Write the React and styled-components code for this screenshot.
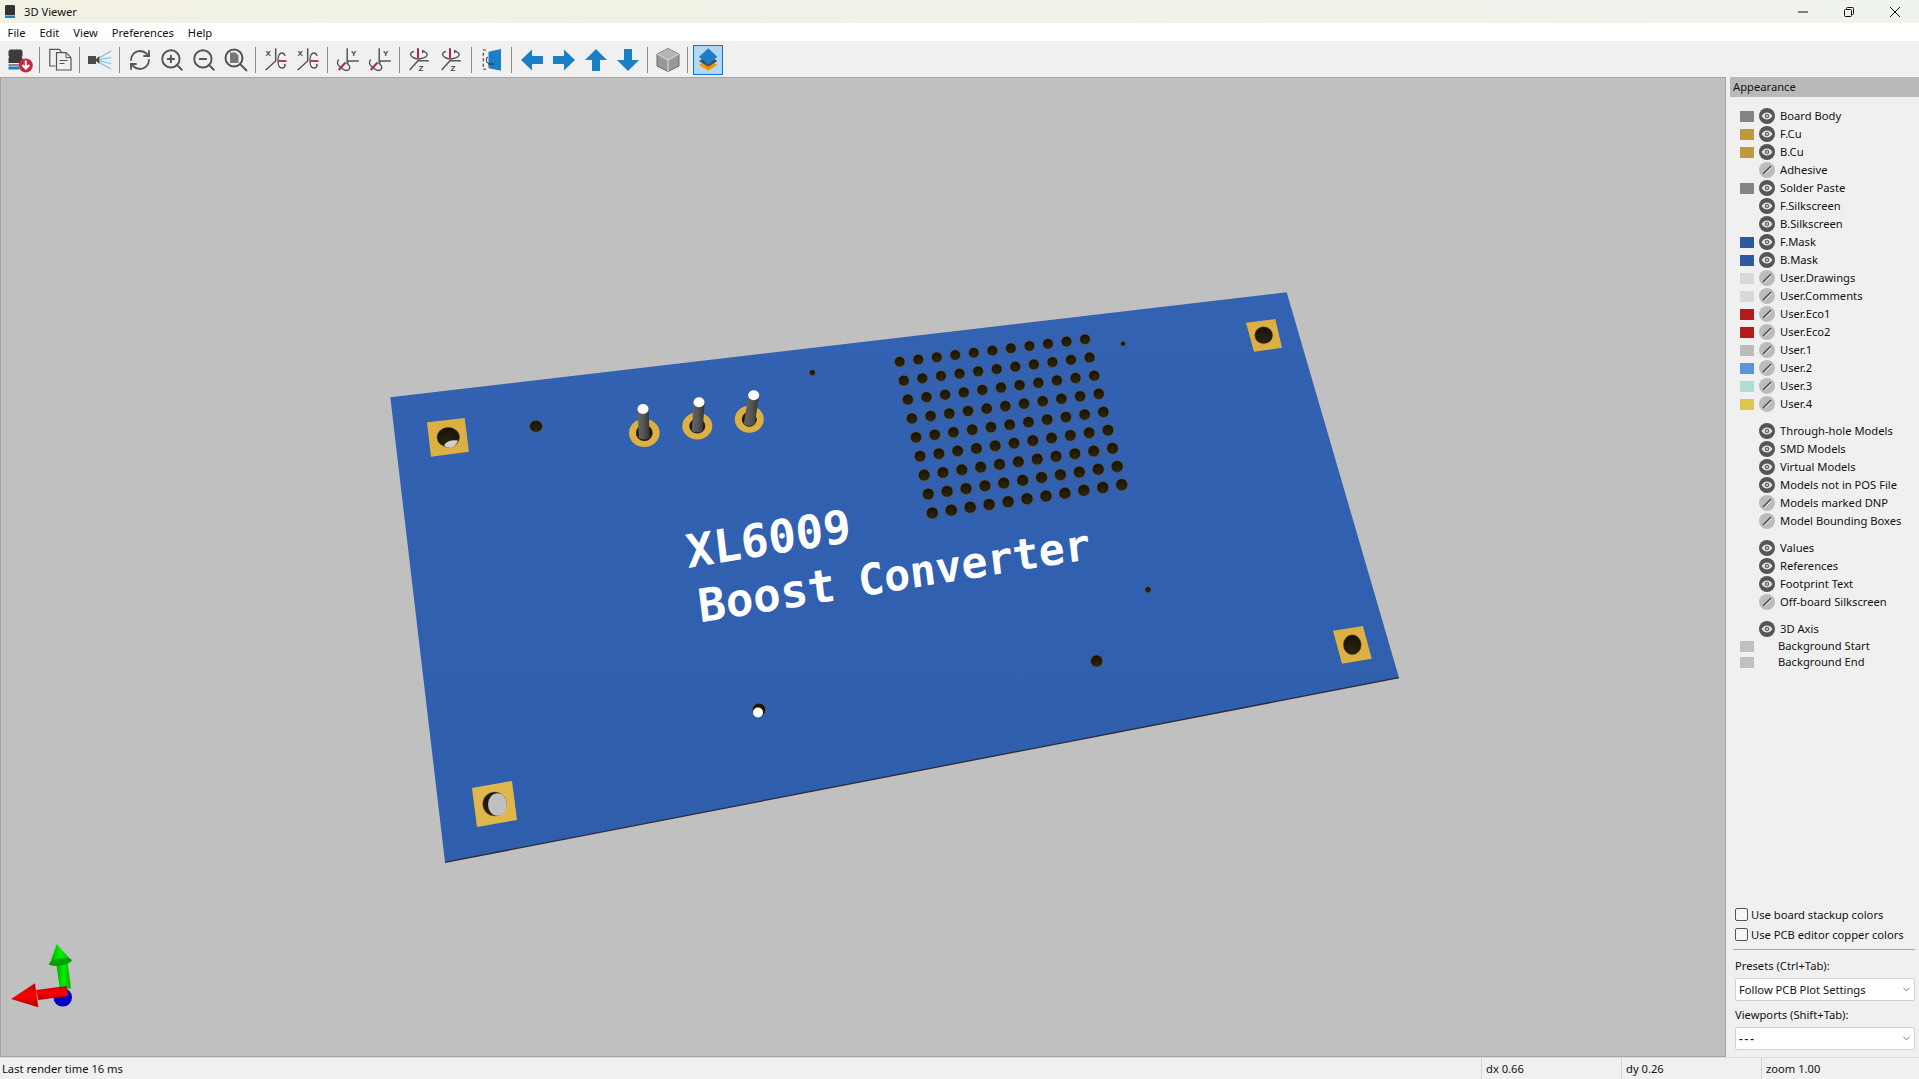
import React from 'react'
import styled, { createGlobalStyle } from 'styled-components'
import { ChevronDown, RefreshCw, ZoomIn, ZoomOut } from 'lucide-react'

const GlobalStyle = createGlobalStyle`
  html, body { margin: 0; padding: 0; height: 100%; overflow: hidden; }
  #root { height: 100%; }
  body { font-family: "Noto Sans", "Open Sans", sans-serif; font-size: 11.2px; color: #111; background: #f0f0f0; }
`

const Window = styled.div`
  display: flex;
  flex-direction: column;
  height: 100vh;
`

const TitleBar = styled.div`
  display: flex;
  align-items: center;
  height: 23px;
  flex: none;
  padding: 0 1px 0 5px;
  background: linear-gradient(90deg, #f2f1e3, #eef3ec);
`

const TitleText = styled.span`
  margin-left: 9px;
  flex: 1;
`

const WinButton = styled.div`
  width: 46px;
  height: 23px;
  display: flex;
  align-items: center;
  justify-content: center;
`

const MenuBar = styled.div`
  display: flex;
  align-items: center;
  height: 18px;
  flex: none;
  padding-left: 1px;
  background: #fff;
`

const MenuItem = styled.span`
  padding: 0 7.3px 0 6.6px;
`

const ToolBar = styled.div`
  display: flex;
  align-items: center;
  height: 35px;
  padding: 1px 0 0 3.5px;
  flex: none;
  background: #f0f0f0;
`

const ToolButton = styled.div`
  display: flex;
  align-items: center;
  justify-content: center;
  flex: none;
  width: ${p => (p.$active ? '30px' : '32px')};
  height: ${p => (p.$active ? '30px' : '32px')};
  margin: 0 ${p => (p.$active ? '1px' : '0')};
  box-sizing: border-box;
  background: ${p => (p.$active ? '#b3d7f5' : 'transparent')};
  border: ${p => (p.$active ? '1px solid #0a78d7' : 'none')};
`

const ToolSep = styled.div`
  flex: none;
  width: 1px;
  height: 26px;
  margin: 0 3.5px;
  background: #8a8a8a;
`

const Main = styled.div`
  display: flex;
  flex: 1;
  min-height: 0;
`

const Viewport = styled.div`
  flex: none;
  width: 1726px;
  box-sizing: border-box;
  border: 1px solid #a4a4a4;
  background: #c0c0c0;
  overflow: hidden;
  svg { display: block; }
`

const Panel = styled.div`
  flex: 1;
  display: flex;
  flex-direction: column;
  min-width: 0;
  margin-left: 4px;
`

const PanelHeader = styled.div`
  height: 20px;
  line-height: 20px;
  padding-left: 3px;
  background: #b9b9b9;
  flex: none;
`

const LayerList = styled.div`
  display: flex;
  flex-direction: column;
  padding: 10px 0 0 10px;
  flex: 1;
`

const LayerGroup = styled.div`
  display: flex;
  flex-direction: column;
  margin-bottom: 9px;
`

const LayerRow = styled.div`
  display: flex;
  align-items: center;
  height: 18px;
`

const BgRow = styled.div`
  display: flex;
  align-items: center;
  height: 16px;
`

const Swatch = styled.div`
  flex: none;
  width: 14px;
  height: 11px;
  margin-right: ${p => p.$gap || 5}px;
  background: ${p => p.$color || 'transparent'};
`

const LayerName = styled.span`
  margin: 0 0 2px ${p => p.$flush ? 0 : 5}px;
  white-space: nowrap;
`

const PanelFooter = styled.div`
  display: flex;
  flex-direction: column;
  padding: 0 4px 7px 5px;
  flex: none;
`

const CheckRow = styled.label`
  display: flex;
  align-items: center;
  height: 20px;
  gap: 3px;
`

const CheckBox = styled.span`
  width: 11px;
  height: 11px;
  border: 1px solid #555;
  border-radius: 2px;
  background: #f6f6f6;
`

const Rule = styled.div`
  height: 1px;
  margin: 5px 0 7px -2px;
  background: #a8a8a8;
`

const FieldLabel = styled.div`
  height: 18px;
  line-height: 18px;
  margin-bottom: 3px;
`

const Select = styled.div`
  display: flex;
  align-items: center;
  justify-content: space-between;
  height: 23px;
  box-sizing: border-box;
  padding: 0 2.5px 0 3px;
  margin-bottom: ${p => (p.$last ? 0 : 5)}px;
  background: #fff;
  border: 1px solid #d0d0d0;
  border-radius: 2px;
`

const DashValue = styled.span`
  letter-spacing: 2px;
  font-weight: 600;
`

const StatusBar = styled.div`
  display: flex;
  align-items: center;
  height: 22px;
  flex: none;
  box-sizing: border-box;
  border-top: 1px solid #dcdcdc;
  background: #f0f0f0;
`

const StatusCell = styled.div`
  box-sizing: border-box;
  height: 100%;
  line-height: 21px;
  padding-left: ${p => (p.$first ? 2 : 4)}px;
  width: ${p => p.$width}px;
  border-left: ${p => (p.$first ? 'none' : '1px solid #d4d4d4')};
`

const Icon = ({ children }) => (
  <svg width="24" height="24" viewBox="0 0 24 24" style={{ overflow: 'visible' }}>{children}</svg>
)

const SaveIcon = () => (
  <Icon>
    <path d="M2 1.500h11l1.500 1.500v5l-1 1 1 1v5H.5v-5l1-1-1-1V3z" fill="#3c3c3c" />
    <rect x="0.500" y="16.500" width="15" height="1" fill="#222" />
    <rect x="0.500" y="18.500" width="11" height="3" fill="#1a7fc8" />
    <circle cx="17.800" cy="17.500" r="7" fill="#c8283c" />
    <path d="M17.800 12.500v8M14.300 17l3.500 3.500 3.500-3.500" fill="none" stroke="#fff" strokeWidth="2" />
  </Icon>
)

const CopyIcon = () => (
  <Icon>
    <path d="M7.500 18H1.800V1.300h9.500l2.500 3" fill="none" stroke="#555" strokeWidth="1.200" />
    <path d="M8.500 4.700h9.500l5 5V22H8.500z" fill="#f0f0f0" stroke="#555" strokeWidth="1.200" />
    <path d="M18 4.700v5h5" fill="none" stroke="#555" strokeWidth="1" />
    <path d="M11.500 12.500h8M11.500 15.500h5" stroke="#555" strokeWidth="1.200" />
  </Icon>
)

const CameraIcon = () => (
  <Icon>
    <rect x="0" y="8" width="8" height="8" fill="#4a4a4a" />
    <path d="M8 11l3.500-3v8L8 13z" fill="#4a4a4a" />
    <path d="M12 9.500L23 3M12 11.500L23 9.500M12 13L23 15.500M12 15L23 21" stroke="#6cc0ec" strokeWidth="1.100" fill="none" />
  </Icon>
)

const FitIcon = () => (
  <Icon>
    <circle cx="10" cy="10" r="8.500" fill="none" stroke="#555" strokeWidth="2" />
    <path d="M6 4.500h5.500l3 3V15H6z" fill="#777" />
    <path d="M16 16l7 7" stroke="#555" strokeWidth="2" />
  </Icon>
)

const axisText = { fontFamily: 'Liberation Sans, sans-serif', fontSize: 8, fontWeight: 700, fill: '#444' }

const RotXIcon = () => (
  <Icon>
    <text x="1.500" y="8.300" style={axisText}>X</text>
    <path d="M11.700 .3V13L1.700 22" fill="none" stroke="#555" strokeWidth="1.500" />
    <path d="M14 13h8.500" stroke="#c02040" strokeWidth="1.800" />
    <path d="M18 5c-3 0-4 4-4 8s1.500 7 4 7 3-2 3-3M18 5c1.500 0 2.500 1 3 3" fill="none" stroke="#555" strokeWidth="1.300" />
    <path d="M19.500 17l1.500-1.500 1.500 2z" fill="#555" />
  </Icon>
)

const RotYIcon = () => (
  <Icon>
    <text x="15" y="8.300" style={axisText}>Y</text>
    <path d="M11.200 .3V13h11.600" fill="none" stroke="#555" strokeWidth="1.500" />
    <path d="M9.500 14.500L2.800 22" stroke="#c02040" strokeWidth="2" />
    <path d="M3 11.500c-2.500 1.500-2 5 1 7.500s7 4.500 9 2.500 0-5-2.500-6.500" fill="none" stroke="#555" strokeWidth="1.400" />
    <path d="M10 13l3 1-1.500 2.500z" fill="#555" />
  </Icon>
)

const RotZIcon = () => (
  <Icon>
    <path d="M10 .3v10" stroke="#c02040" strokeWidth="2" />
    <path d="M6 3.500c-3 .5-4 2-3 4s5 3.500 7 3.500 8-1 9-3.500-2-4-5-4.500" fill="none" stroke="#555" strokeWidth="1.400" />
    <path d="M14 1.500l3 2-3 2z" fill="#555" />
    <path d="M20.700 12.700H10L1.700 22" fill="none" stroke="#555" strokeWidth="1.500" />
    <text x="10.500" y="23" style={axisText}>Z</text>
  </Icon>
)

const OrthoIcon = () => (
  <Icon>
    <path d="M6 2H3.300v19.300H6" fill="none" stroke="#333" strokeWidth="1.100" strokeDasharray="3 2.500" />
    <path d="M8 9a3.500 3.500 0 0 0 0 6h3" fill="none" stroke="#555" strokeWidth="1.200" />
    <path d="M8.500 3.700L21 1v21.700l-12.500-2.400z" fill="#1a7fc8" />
    <path d="M8 16h6" stroke="#333" strokeWidth="1.200" />
  </Icon>
)

const ArrowIcon = ({ points }) => (
  <Icon><polygon points={points} fill="#1a80c6" /></Icon>
)

const CubeIcon = () => (
  <Icon>
    <path d="M12 .5L23 6v12l-11 5.500L1 18V6z" fill="#989898" stroke="#6a6a6a" strokeWidth="1" />
    <path d="M12 .5L23 6l-11 6L1 6z" fill="#b4b4b4" />
    <path d="M1 6l11 6 11-6M12 12v11.500" fill="none" stroke="#dcdcdc" strokeWidth="1" />
  </Icon>
)

const LayersIcon = () => (
  <Icon>
    <path d="M3 17l9.300-6 9 6-9 5.700z" fill="#f0960e" />
    <path d="M3 13l9.300-6 9 6-9 5.700z" fill="#4a4a4a" />
    <path d="M3 8.700L12.300.3l9 8.400-9 8.300z" fill="#1a7fc8" />
  </Icon>
)

const EyeIcon = ({ on }) => (
  <svg width="16" height="16" viewBox="0 0 16 16" style={{ flex: 'none' }}>
    {on ? (
      <>
        <circle cx="8" cy="8" r="8" fill="#555" />
        <path d="M2.500 8C4 5.500 6 4.500 8 4.500S12 5.500 13.500 8C12 10.500 10 11.500 8 11.500S4 10.500 2.500 8z" fill="#e4e4e4" />
        <circle cx="8" cy="8" r="2.300" fill="#666" />
        <circle cx="8" cy="8" r="1" fill="#ddd" />
      </>
    ) : (
      <>
        <circle cx="8" cy="8" r="8" fill="#bcbcbc" />
        <path d="M4 12L12 4" stroke="#4c4c4c" strokeWidth="1.500" />
        <path d="M5.500 12.500L12.500 5.500" stroke="#efefef" strokeWidth="1" />
      </>
    )}
  </svg>
)

const layerGroups = [
  [
    ['Board Body', '#848484', 1],
    ['F.Cu', '#bf9a3d', 1],
    ['B.Cu', '#bf9a3d', 1],
    ['Adhesive', null, 0],
    ['Solder Paste', '#848484', 1],
    ['F.Silkscreen', null, 1],
    ['B.Silkscreen', null, 1],
    ['F.Mask', '#2d5a9f', 1],
    ['B.Mask', '#2d5a9f', 1],
    ['User.Drawings', '#d8d8d8', 0],
    ['User.Comments', '#d8d8d8', 0],
    ['User.Eco1', '#b41a1a', 0],
    ['User.Eco2', '#b41a1a', 0],
    ['User.1', '#bcbcbc', 0],
    ['User.2', '#5a95dd', 0],
    ['User.3', '#b2dbd1', 0],
    ['User.4', '#dcc84e', 0],
  ],
  [
    ['Through-hole Models', null, 1],
    ['SMD Models', null, 1],
    ['Virtual Models', null, 1],
    ['Models not in POS File', null, 1],
    ['Models marked DNP', null, 0],
    ['Model Bounding Boxes', null, 0],
  ],
  [
    ['Values', null, 1],
    ['References', null, 1],
    ['Footprint Text', null, 1],
    ['Off-board Silkscreen', null, 0],
  ],
]

// corners of the via field, in page pixels
const gridTL = [899.7, 361.7]
const gridTR = [1085, 339.3]
const gridBL = [932.3, 513]
const gridBR = [1121.7, 484.7]

const vias = []
for (let r = 0; r < 9; r++) {
  for (let c = 0; c < 11; c++) {
    const u = c / 10
    const v = r / 8
    const top = [gridTL[0] + (gridTR[0] - gridTL[0]) * u, gridTL[1] + (gridTR[1] - gridTL[1]) * u]
    const bot = [gridBL[0] + (gridBR[0] - gridBL[0]) * u, gridBL[1] + (gridBR[1] - gridBL[1]) * u]
    vias.push({ id: r + '-' + c, x: top[0] + (bot[0] - top[0]) * v, y: top[1] + (bot[1] - top[1]) * v, r: 5.3 + v * 0.7 })
  }
}

const Hole = ({ x, y, rx, ry = rx }) => (
  <ellipse cx={x} cy={y} rx={rx} ry={ry} fill="url(#holeFill)" stroke="#7d6524" strokeWidth="0.5" />
)

const Pin = ({ pad, top, rx, ry }) => (
  <g>
    <ellipse cx={pad[0]} cy={pad[1]} rx={rx} ry={ry} fill="#dcb043" />
    <ellipse cx={pad[0]} cy={pad[1]} rx={rx - 7} ry={ry - 6} fill="#1d1709" />
    <path d={`M${top[0] - 5.5} ${top[1]} L${pad[0] - 5.5} ${pad[1] + 5} Q${pad[0]} ${pad[1] + 8} ${pad[0] + 5.5} ${pad[1] + 5} L${top[0] + 5.5} ${top[1]} Z`} fill="url(#pinFill)" />
    <ellipse cx={top[0]} cy={top[1]} rx="5.500" ry="5" fill="#fff" />
  </g>
)

const Board = () => (
  <svg width="1724" height="978" viewBox="1 78 1724 978">
    <defs>
      <radialGradient id="holeFill" cx="0.5" cy="0.8" r="0.8">
        <stop offset="0" stopColor="#2b2412" />
        <stop offset="1" stopColor="#171206" />
      </radialGradient>
      <linearGradient id="pinFill" x1="0" x2="1" y1="0" y2="0">
        <stop offset="0" stopColor="#666" />
        <stop offset="0.5" stopColor="#555" />
        <stop offset="1" stopColor="#333" />
      </linearGradient>
      <linearGradient id="boardFill" x1="0" x2="0" y1="0" y2="1">
        <stop offset="0" stopColor="#3262b1" />
        <stop offset="1" stopColor="#2e5eac" />
      </linearGradient>
      <linearGradient id="greenFill" x1="0" x2="1" y1="0" y2="0">
        <stop offset="0" stopColor="#00a800" />
        <stop offset="0.5" stopColor="#00f000" />
        <stop offset="1" stopColor="#00b000" />
      </linearGradient>
      <linearGradient id="redFill" x1="0" x2="0" y1="0" y2="1">
        <stop offset="0" stopColor="#c00000" />
        <stop offset="0.5" stopColor="#ff0000" />
        <stop offset="1" stopColor="#b00000" />
      </linearGradient>
    </defs>

    <polygon points="390.3,397.3 1286.7,292.3 1399,677.7 445,862.3" fill="url(#boardFill)" />
    <path d="M445 862.300L1399 677.700" stroke="#2b2b33" strokeWidth="1.300" />

    <polygon points="427,422.300 464.700,418 469,451.700 431,456.700" fill="#dcb043" />
    <Hole x={448.3} y={437.3} rx={11.3} ry={10} />
    <path d="M444 445.500q3-6 14-5q-2 6-8 7q-4 0-6-2z" fill="#d0d0d0" />

    <polygon points="1246,322.700 1275.300,319 1282,347.700 1254,351.700" fill="#dcb043" />
    <Hole x={1263.7} y={335.3} rx={9} ry={8.5} />

    <polygon points="1333,630.700 1363,626 1371.700,658.700 1342,663.700" fill="#dcb043" />
    <Hole x={1352.3} y={644.7} rx={9} ry={10} />

    <polygon points="472,788 512,781 517,820 477,827" fill="#e0b74c" />
    <Hole x={494.7} y={804} rx={12} />
    <ellipse cx={497.5} cy={804.5} rx={9.5} ry={11.2} fill="#c0c0c0" />

    <Hole x={536} y={426.3} rx={6.5} ry={6} />
    <Hole x={812.3} y={372.7} rx={3} />
    <Hole x={1123} y={343.7} rx={2.5} />
    <Hole x={1148} y={589.7} rx={3} />
    <Hole x={1096.6} y={661} rx={6} />
    <Hole x={759} y={710} rx={6.7} />
    <circle cx={758} cy={712.5} r={5} fill="#fff" />

    {vias.map(v => <Hole key={v.id} x={v.x} y={v.y} rx={v.r} />)}

    <Pin pad={[644.3, 433]} top={[643, 409]} rx={15.3} ry={14} />
    <Pin pad={[697.3, 426]} top={[699, 402.3]} rx={15} ry={13.5} />
    <Pin pad={[749.3, 419.3]} top={[753.7, 395.3]} rx={14.5} ry={13.5} />

    <g fontFamily="'DejaVu Sans Mono', monospace" fontWeight="700" fill="#fff">
      <text fontSize="45.5" transform="matrix(1 -0.163 0.118 1 688 568)">XL6009</text>
      <text fontSize="45.5" transform="matrix(1 -0.163 0.118 1 700 622.500)">Boost</text>
      <text fontSize="42.8" transform="matrix(1 -0.163 0.118 1 860 596.500)">Converter</text>
    </g>

    <g>
      <circle cx="62.700" cy="997.300" r="9.300" fill="#0000c0" />
      <polygon points="56,961.700 67.300,960 71,988.300 60,990" fill="url(#greenFill)" />
      <polygon points="56.700,944 71.700,960.700 49.300,965" fill="url(#greenFill)" />
      <ellipse cx="60.500" cy="962" rx="11.500" ry="3.500" fill="#00a000" transform="rotate(-10 60.500 962)" />
      <polygon points="36,990 66.700,986 68.300,996 38.300,1000" fill="url(#redFill)" />
      <polygon points="11,999 35,983.300 38.300,1007.300" fill="url(#redFill)" />
    </g>
  </svg>
)

const App = () => (
  <Window>
    <GlobalStyle />
    <TitleBar>
      <svg width="10" height="13" viewBox="0 0 10 13" style={{ flex: 'none' }}>
        <path d="M1 0h8l1 1v9H0V1z" fill="#333" />
        <rect x="0" y="10.500" width="10" height="2.500" fill="#1a7fc8" />
      </svg>
      <TitleText>3D Viewer</TitleText>
      <WinButton>
        <svg width="10" height="10" viewBox="0 0 10 10"><path d="M0 5h10" stroke="#111" /></svg>
      </WinButton>
      <WinButton>
        <svg width="10" height="10" viewBox="0 0 10 10">
          <rect x="0.500" y="2.500" width="7" height="7" rx="1" fill="none" stroke="#111" />
          <path d="M2.500 2.500v-1a1 1 0 0 1 1-1h5a1 1 0 0 1 1 1v5a1 1 0 0 1-1 1h-1" fill="none" stroke="#111" />
        </svg>
      </WinButton>
      <WinButton>
        <svg width="10" height="10" viewBox="0 0 10 10"><path d="M0 0l10 10M10 0L0 10" stroke="#111" /></svg>
      </WinButton>
    </TitleBar>

    <MenuBar>
      {['File', 'Edit', 'View', 'Preferences', 'Help'].map(m => <MenuItem key={m}>{m}</MenuItem>)}
    </MenuBar>

    <ToolBar>
      <ToolButton><SaveIcon /></ToolButton>
      <ToolSep />
      <ToolButton><CopyIcon /></ToolButton>
      <ToolSep />
      <ToolButton><CameraIcon /></ToolButton>
      <ToolSep />
      <ToolButton><RefreshCw size={24} color="#555" strokeWidth={1.8} /></ToolButton>
      <ToolButton><ZoomIn size={26} color="#555" strokeWidth={1.8} /></ToolButton>
      <ToolButton><ZoomOut size={26} color="#555" strokeWidth={1.8} /></ToolButton>
      <ToolButton><FitIcon /></ToolButton>
      <ToolSep />
      <ToolButton><RotXIcon /></ToolButton>
      <ToolButton><RotXIcon /></ToolButton>
      <ToolSep />
      <ToolButton><RotYIcon /></ToolButton>
      <ToolButton><RotYIcon /></ToolButton>
      <ToolSep />
      <ToolButton><RotZIcon /></ToolButton>
      <ToolButton><RotZIcon /></ToolButton>
      <ToolSep />
      <ToolButton><OrthoIcon /></ToolButton>
      <ToolSep />
      <ToolButton><ArrowIcon points="1,12 12,1.5 12,8 23,8 23,16 12,16 12,22.5" /></ToolButton>
      <ToolButton><ArrowIcon points="23,12 12,1.5 12,8 1,8 1,16 12,16 12,22.5" /></ToolButton>
      <ToolButton><ArrowIcon points="12,1 23,12 16,12 16,23 8,23 8,12 1,12" /></ToolButton>
      <ToolButton><ArrowIcon points="12,23 23,12 16,12 16,1 8,1 8,12 1,12" /></ToolButton>
      <ToolSep />
      <ToolButton><CubeIcon /></ToolButton>
      <ToolSep />
      <ToolButton $active><LayersIcon /></ToolButton>
    </ToolBar>

    <Main>
      <Viewport><Board /></Viewport>
      <Panel>
        <PanelHeader>Appearance</PanelHeader>
        <LayerList>
          {layerGroups.map((group, i) => (
            <LayerGroup key={i}>
              {group.map(([name, color, on]) => (
                <LayerRow key={name}>
                  <Swatch $color={color} />
                  <EyeIcon on={on} />
                  <LayerName>{name}</LayerName>
                </LayerRow>
              ))}
            </LayerGroup>
          ))}
          <LayerRow>
            <Swatch />
            <EyeIcon on />
            <LayerName>3D Axis</LayerName>
          </LayerRow>
          <BgRow><Swatch $color="#c0c0c0" $gap={24} /><LayerName $flush>Background Start</LayerName></BgRow>
          <BgRow><Swatch $color="#c0c0c0" $gap={24} /><LayerName $flush>Background End</LayerName></BgRow>
        </LayerList>
        <PanelFooter>
          <CheckRow><CheckBox />Use board stackup colors</CheckRow>
          <CheckRow><CheckBox />Use PCB editor copper colors</CheckRow>
          <Rule />
          <FieldLabel>Presets (Ctrl+Tab):</FieldLabel>
          <Select>Follow PCB Plot Settings<ChevronDown size={11} color="#666" /></Select>
          <FieldLabel>Viewports (Shift+Tab):</FieldLabel>
          <Select $last><DashValue>---</DashValue><ChevronDown size={11} color="#666" /></Select>
        </PanelFooter>
      </Panel>
    </Main>

    <StatusBar>
      <StatusCell $first $width={1481}>Last render time 16 ms</StatusCell>
      <StatusCell $width={140}>dx 0.66</StatusCell>
      <StatusCell $width={140}>dy 0.26</StatusCell>
      <StatusCell $width={157}>zoom 1.00</StatusCell>
    </StatusBar>
  </Window>
)

export default App
